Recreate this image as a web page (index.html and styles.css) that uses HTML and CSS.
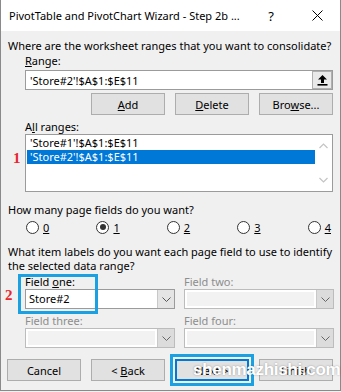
FILE: index.html
```html
<!DOCTYPE html>
<html lang="en">
<head>
  <meta charset="UTF-8" />
  <title>PivotTable and PivotChart Wizard - Step 2b</title>
  <link rel="stylesheet" href="styles.css">
</head>
<body>

  <div class="window">
    <div class="titlebar">
      <span class="title">PivotTable and PivotChart Wizard - Step 2b ...</span>
      <span class="help">?</span>
      <svg class="close" width="11" height="11" viewBox="0 0 11 11">
        <path d="M0.5 0.5 L10.5 10.5 M10.5 0.5 L0.5 10.5" stroke="#000" stroke-width="1" fill="none"/>
      </svg>
    </div>

    <div class="body">
      <p class="line">Where are the worksheet ranges that you want to consolidate?</p>

      <div class="indent">
        <div class="label"><u>R</u>ange:</div>
        <div class="textbox">
          <span class="value">'Store#2'!$A$1:$E$11</span>
          <span class="collapse">
            <svg width="11" height="12" viewBox="0 0 11 12">
              <path d="M5.5 1 L1 5.5 L4 5.5 L4 9 L7 9 L7 5.5 L10 5.5 Z" fill="#000"/>
              <rect x="0.5" y="10" width="10" height="1.6" fill="#000"/>
            </svg>
          </span>
        </div>

        <div class="btn-row">
          <button class="btn"><u>A</u>dd</button>
          <button class="btn"><u>D</u>elete</button>
          <button class="btn">Bro<u>w</u>se...</button>
        </div>

        <div class="label label-all">A<u>l</u>l ranges:</div>
        <div class="listbox">
          <span class="marker marker-one">1</span>
          <div class="items">
            <div class="item">'Store#1'!$A$1:$E$11</div>
            <div class="item selected">'Store#2'!$A$1:$E$11</div>
          </div>
          <div class="scrollbar">
            <svg width="9" height="6" viewBox="0 0 9 6"><path d="M0.5 5 L4.5 1 L8.5 5" stroke="#c4c4c4" stroke-width="1.2" fill="none"/></svg>
            <svg width="9" height="6" viewBox="0 0 9 6"><path d="M0.5 1 L4.5 5 L8.5 1" stroke="#c4c4c4" stroke-width="1.2" fill="none"/></svg>
          </div>
        </div>
      </div>

      <p class="line q-fields">How many page fields do you want?</p>
      <div class="radios">
        <label class="radio"><span class="circle"></span><u>0</u></label>
        <label class="radio"><span class="circle checked"></span><u>1</u></label>
        <label class="radio"><span class="circle"></span><u>2</u></label>
        <label class="radio"><span class="circle"></span><u>3</u></label>
        <label class="radio"><span class="circle"></span><u>4</u></label>
      </div>

      <p class="line q-labels">What item labels do you want each page field to use to identify<br>the selected data range?</p>

      <div class="fields">
        <div class="field field-one">
          <span class="marker marker-two">2</span>
          <div class="label">Field <u>o</u>ne:</div>
          <div class="combo">
            <span class="combo-text">Store#2</span>
            <span class="drop"><svg width="9" height="5" viewBox="0 0 9 5"><path d="M0.5 0.5 L4.5 4.5 L8.5 0.5" stroke="#555" stroke-width="1" fill="none"/></svg></span>
          </div>
        </div>
        <div class="field disabled">
          <div class="label">Field two:</div>
          <div class="combo">
            <span class="combo-text"></span>
            <span class="drop"><svg width="9" height="5" viewBox="0 0 9 5"><path d="M0.5 0.5 L4.5 4.5 L8.5 0.5" stroke="#555" stroke-width="1" fill="none"/></svg></span>
          </div>
        </div>
        <div class="field disabled">
          <div class="label">Field three:</div>
          <div class="combo">
            <span class="combo-text"></span>
            <span class="drop"><svg width="9" height="5" viewBox="0 0 9 5"><path d="M0.5 0.5 L4.5 4.5 L8.5 0.5" stroke="#555" stroke-width="1" fill="none"/></svg></span>
          </div>
        </div>
        <div class="field disabled">
          <div class="label">Field four:</div>
          <div class="combo">
            <span class="combo-text"></span>
            <span class="drop"><svg width="9" height="5" viewBox="0 0 9 5"><path d="M0.5 0.5 L4.5 4.5 L8.5 0.5" stroke="#555" stroke-width="1" fill="none"/></svg></span>
          </div>
        </div>
      </div>

      <div class="footer-btns">
        <button class="btn">Cancel</button>
        <button class="btn">&lt; <u>B</u>ack</button>
        <button class="btn btn-default">Next &gt;</button>
        <button class="btn">Finish</button>
        <span class="watermark">shenmazhishi.com</span>
      </div>
    </div>
  </div>

</body>
</html>
```

FILE: styles.css
```css
body {
  margin: 0;
  padding: 0;
  font-family: 'Noto Sans', sans-serif;
  font-size: 11px;
  color: #000;
  background: #f0f0f0;
}

.window {
  width: 341px;
  height: 391px;
  box-sizing: border-box;
  border: 1px solid #8a8a8a;
  border-top: none;
  background: #f0f0f0;
}

.titlebar {
  height: 31px;
  display: flex;
  align-items: center;
  background: #fff;
  padding-left: 8px;
}

.title {
  font-size: 11px;
  flex: 1;
  white-space: nowrap;
}

.help {
  font-size: 13px;
  margin-right: 38px;
}

.close {
  margin-right: 17px;
}

.body {
  padding: 7px 7px 0 7px;
}

.line {
  margin: 0;
  line-height: 15px;
}

.indent {
  padding-left: 17px;
}

.label {
  line-height: 15px;
}

.textbox {
  margin-top: 2px;
  height: 20px;
  box-sizing: border-box;
  border: 1px solid #9b9b9b;
  background: #fff;
  display: flex;
  align-items: center;
}

.textbox .value {
  flex: 1;
  padding-left: 4px;
}

.collapse {
  width: 20px;
  height: 18px;
  box-sizing: border-box;
  background: #e9e9e9;
  border: 1px solid #b0b0b0;
  display: flex;
  align-items: center;
  justify-content: center;
}

.btn-row {
  display: flex;
  justify-content: flex-end;
  gap: 10px;
  margin-top: 3px;
}

.btn {
  width: 74px;
  height: 22px;
  box-sizing: border-box;
  background: #e1e1e1;
  border: 1px solid #adadad;
  font-family: inherit;
  font-size: 11px;
  color: #000;
  padding: 0;
}

.label-all {
  margin-top: 4px;
}

.listbox {
  position: relative;
  height: 58px;
  box-sizing: border-box;
  border: 1px solid #9b9b9b;
  background: #fff;
  display: flex;
}

.items {
  flex: 1;
  padding: 1px 0 0 1px;
}

.item {
  height: 14px;
  line-height: 14px;
  padding-left: 3px;
}

.item.selected {
  background: #0078d7;
  color: #fff;
}

.scrollbar {
  width: 17px;
  display: flex;
  flex-direction: column;
  align-items: center;
  justify-content: space-between;
  padding: 8px 0 8px;
}

.marker {
  position: absolute;
  font-family: 'Liberation Serif', serif;
  font-weight: bold;
  font-size: 15px;
  color: #e8262c;
  line-height: 15px;
}

.marker-one {
  left: -13px;
  top: 16px;
}

.q-fields {
  margin-top: 10px;
}

.radios {
  display: flex;
  justify-content: space-between;
  padding: 0 2px 0 18px;
  margin-top: 2px;
  height: 16px;
  align-items: center;
}

.radio {
  display: flex;
  align-items: center;
  gap: 4px;
}

.circle {
  width: 13px;
  height: 13px;
  box-sizing: border-box;
  border: 1px solid #333;
  border-radius: 50%;
  background: #fff;
  display: flex;
  align-items: center;
  justify-content: center;
}

.circle.checked::after {
  content: "";
  width: 6px;
  height: 6px;
  border-radius: 50%;
  background: #333;
}

.q-labels {
  margin-top: 10px;
  line-height: 13.5px;
}

.fields {
  display: grid;
  grid-template-columns: 150px 150px;
  column-gap: 9px;
  row-gap: 4px;
  padding-left: 17px;
  margin-top: 2px;
}

.field {
  position: relative;
}

.field-one::after {
  content: "";
  position: absolute;
  left: -7px;
  top: 0;
  width: 80px;
  height: 40px;
  box-sizing: border-box;
  border: 3px solid #1ba1e2;
}

.marker-two {
  left: -20px;
  top: 14px;
}

.combo {
  height: 20px;
  box-sizing: border-box;
  border: 1px solid #9b9b9b;
  background: #fff;
  display: flex;
}

.combo-text {
  flex: 1;
  padding-left: 3px;
  line-height: 18px;
}

.drop {
  width: 16px;
  background: #e4e4e4;
  border-left: 1px solid #c8c8c8;
  display: flex;
  align-items: center;
  justify-content: center;
}

.field.disabled .label {
  color: #8d8d8d;
}

.field.disabled .combo {
  border-color: #bcbcbc;
}

.field.disabled .combo-text {
  margin: 2px;
  background: #f2f2f2;
}

.field.disabled .drop {
  background: #dcdcdc;
}

.field.disabled .drop path {
  stroke: #666;
}

.footer-btns {
  position: relative;
  display: flex;
  gap: 10px;
  margin-top: 11px;
  margin-left: -1px;
}

.btn-default {
  border: 2px solid #0078d7;
  outline: 3px solid #1ba1e2;
  outline-offset: 2px;
}

.watermark {
  position: absolute;
  left: 186px;
  top: 1px;
  font-family: 'Liberation Sans', sans-serif;
  font-weight: bold;
  font-size: 17px;
  color: #fff;
  letter-spacing: -0.3px;
  text-shadow: 0 0 2px rgba(0, 0, 0, 0.35);
}
```
